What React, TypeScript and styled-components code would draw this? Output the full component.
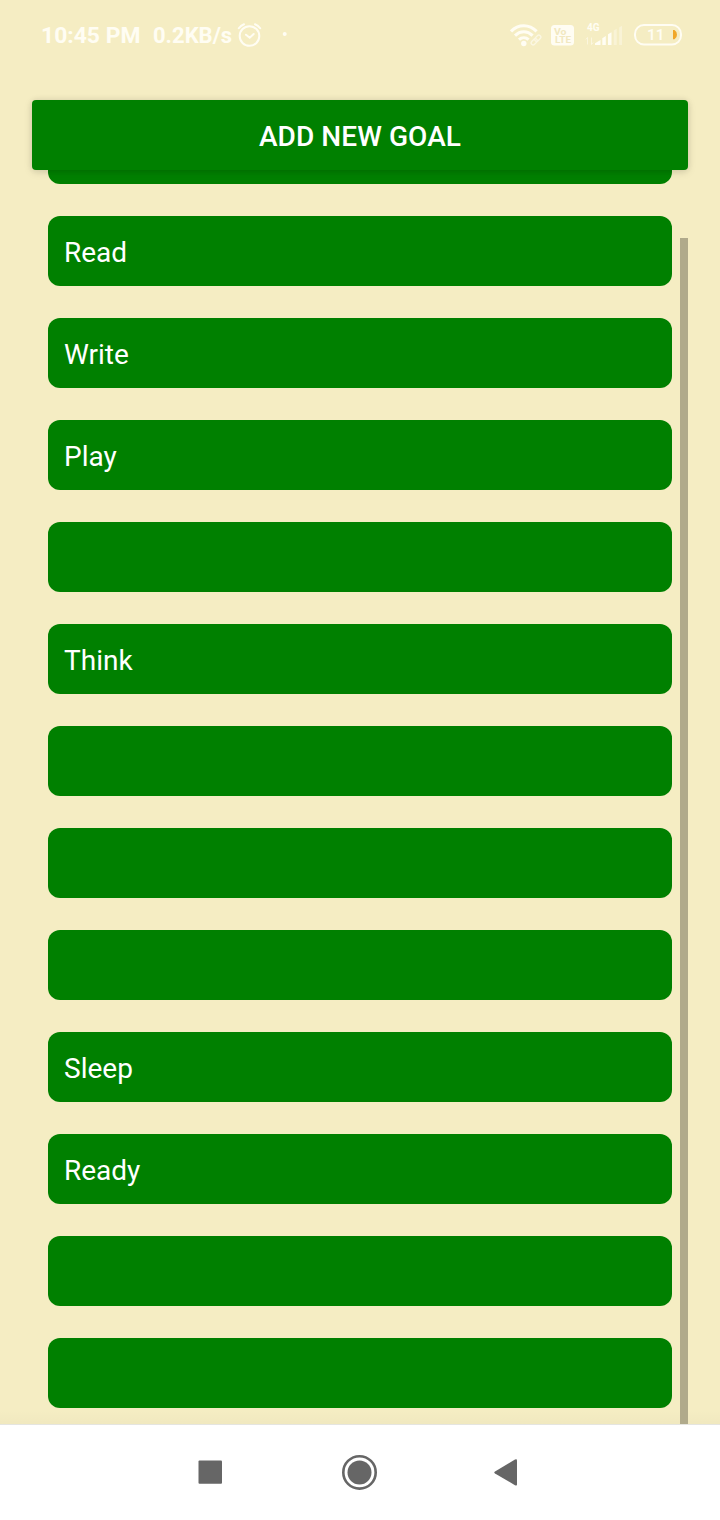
import React from 'react';
import styled, { createGlobalStyle } from 'styled-components';

const GlobalStyle = createGlobalStyle`
  * { box-sizing: border-box; }
  body { margin: 0; background: #f5edc3; font-family: Roboto, sans-serif; }
`;

const Screen = styled.div`
  display: flex;
  flex-direction: column;
  width: 720px;
  height: 1520px;
  overflow: hidden;
  background: #f5edc3;
`;

const StatusBar = styled.header`
  display: flex;
  align-items: center;
  justify-content: space-between;
  flex: none;
  height: 70px;
  padding: 0 38px 0 41px;
  color: #fffdf3;
`;

const StatusGroup = styled.div`
  display: flex;
  align-items: center;
  height: 70px;
`;

const StatusText = styled.span<{ $width: number; $size: number }>`
  width: ${(p) => p.$width}px;
  padding-top: 2px;
  font-size: ${(p) => p.$size}px;
  font-weight: 700;
  line-height: 26px;
  white-space: pre;
`;

const StatusIcon = styled.svg<{ $gap?: number }>`
  display: block;
  flex: none;
  margin-left: ${(p) => p.$gap ?? 0}px;
`;

const AddButton = styled.button`
  position: relative;
  z-index: 1;
  flex: none;
  height: 70px;
  margin: 30px 32px 0;
  padding: 4px 0 0;
  border: 0;
  border-radius: 4px;
  background: #008000;
  box-shadow: 0 2px 9px rgba(0, 0, 0, 0.13), 0 0 6px rgba(0, 0, 0, 0.07);
  color: #fff;
  font: 500 28px/34px Roboto, sans-serif;
  letter-spacing: 0.08px;
`;

const ScrollArea = styled.main`
  display: flex;
  flex: 1;
  min-height: 0;
  gap: 8px;
  padding: 0 32px 0 48px;
  overflow: hidden;
  background: linear-gradient(to top, rgba(0, 0, 0, 0.02), transparent 14px);
`;

const GoalList = styled.ul`
  display: flex;
  flex: 1;
  flex-direction: column;
  gap: 32px;
  margin: -56px 0 0;
  padding: 0;
  list-style: none;
`;

const Goal = styled.li`
  flex: none;
  height: 70px;
  padding: 20px 16px 0;
  border-radius: 12px;
  background: #008000;
  color: #fff;
  font-size: 28px;
  line-height: 34px;
`;

const ScrollThumb = styled.div`
  width: 8px;
  margin-top: 68px;
  background: #b0aa8b;
`;

const NavBar = styled.nav`
  display: flex;
  align-items: center;
  justify-content: space-between;
  flex: none;
  height: 96px;
  padding: 0 192px 1px;
  border-top: 1px solid #e5e5e0;
  background: #fff;
`;

const NavIcon = styled.svg`
  display: block;
  width: 36px;
  height: 36px;
  fill: #666;
`;

const goals = ['', 'Read', 'Write', 'Play', '', 'Think', '', '', '', 'Sleep', 'Ready', '', ''];

const AlarmIcon = () => (
  <StatusIcon width="26" height="26" viewBox="0 0 26 26" fill="none" stroke="currentColor" strokeWidth="2">
    <circle cx="12.5" cy="14" r="9.8" />
    <path d="M9 12.7l3.7 3 4-3.7M1.8 6.3C3.2 4.3 4.8 3 7 2.2M23.2 6.3C21.8 4.3 20.2 3 18 2.2" strokeLinecap="round" />
  </StatusIcon>
);

const DotIcon = () => (
  <StatusIcon $gap={19} width="6" height="6" viewBox="0 0 6 6">
    <circle cx="2.7" cy="2" r="2" fill="currentColor" />
  </StatusIcon>
);

const WifiIcon = () => (
  <StatusIcon width="34" height="24" viewBox="0 0 34 24" fill="none" stroke="currentColor">
    <path
      d="M1 8.4C8.3.9 19.3.9 26.6 8.4M5 12.6C10.3 7.5 17.3 7.5 22.6 12.6M9 16.7C11.8 14.1 15.8 14.1 18.6 16.7"
      strokeWidth="3.1"
    />
    <circle cx="13.8" cy="20.5" r="2.7" fill="currentColor" stroke="none" />
    <g strokeWidth="1.4" opacity="0.65" transform="rotate(-45 26 17)">
      <rect x="20" y="15" width="7" height="4" rx="2" />
      <rect x="25" y="15" width="7" height="4" rx="2" />
    </g>
  </StatusIcon>
);

const VolteIcon = () => (
  <StatusIcon $gap={7} width="23" height="21" viewBox="0 0 23 21">
    <rect width="23" height="20.5" rx="3.5" fill="currentColor" />
    <g fill="#f1e8c0" fontFamily="Roboto, sans-serif" fontWeight="700" fontSize="9.5">
      <text x="3" y="9.5" textLength="12.5" lengthAdjust="spacingAndGlyphs">Vo</text>
      <text x="4" y="18.3" textLength="16" lengthAdjust="spacingAndGlyphs">LTE</text>
    </g>
  </StatusIcon>
);

const SignalIcon = () => (
  <StatusIcon $gap={11} width="38" height="26" viewBox="0 0 38 26" fill="currentColor">
    <text x="2" y="8.5" fontFamily="Roboto, sans-serif" fontWeight="700" fontSize="10">4G</text>
    <path d="M2.5 22.5V15.5M2.5 15.5L.8 17.5M6.5 15.5V22.5M6.5 22.5L8.2 20.5" fill="none" stroke="currentColor" opacity="0.55" />
    <path d="M10 23V21.3L15.5 18V23zM17.3 23V16.2L20.8 14V23zM23 23V12.3L26.5 10.2V23z" />
    <path d="M28.7 23V8.5L31.7 6.7V23zM34.2 23V5.5L37 3.7V23z" opacity="0.4" />
  </StatusIcon>
);

const BatteryIcon = () => (
  <StatusIcon $gap={11} width="48" height="22" viewBox="0 0 48 22">
    <rect x="1" y="1" width="46" height="19.5" rx="9" fill="none" stroke="currentColor" strokeWidth="2" />
    <path d="M39 6h1.5Q43 7.5 43 10.7T40.5 15.3H39z" fill="#f0a728" />
    <text x="13" y="16.2" fontFamily="Roboto, sans-serif" fontWeight="500" fontSize="15.5" fill="currentColor">11</text>
  </StatusIcon>
);

export default function App() {
  return (
    <Screen>
      <GlobalStyle />
      <StatusBar>
        <StatusGroup>
          <StatusText $width={112} $size={22.9}>10:45 PM</StatusText>
          <StatusText $width={84} $size={22}>0.2KB/s</StatusText>
          <AlarmIcon />
          <DotIcon />
        </StatusGroup>
        <StatusGroup>
          <WifiIcon />
          <VolteIcon />
          <SignalIcon />
          <BatteryIcon />
        </StatusGroup>
      </StatusBar>
      <AddButton>ADD NEW GOAL</AddButton>
      <ScrollArea>
        <GoalList>
          {goals.map((goal, i) => (
            <Goal key={i}>{goal}</Goal>
          ))}
        </GoalList>
        <ScrollThumb />
      </ScrollArea>
      <NavBar>
        <NavIcon viewBox="0 0 36 36">
          <rect x="6.5" y="6.4" width="23.5" height="23.3" rx="1" />
        </NavIcon>
        <NavIcon viewBox="0 0 36 36">
          <circle cx="17.5" cy="18.4" r="16.2" fill="none" stroke="#666" strokeWidth="2.6" />
          <circle cx="17.5" cy="18.4" r="12" />
        </NavIcon>
        <NavIcon viewBox="0 0 36 36">
          <path d="M3 17.4Q1.5 18.4 3 19.4L23 31.2Q25 32.2 25 30.4V6.6Q25 4.6 23 5.6z" />
        </NavIcon>
      </NavBar>
    </Screen>
  );
}
